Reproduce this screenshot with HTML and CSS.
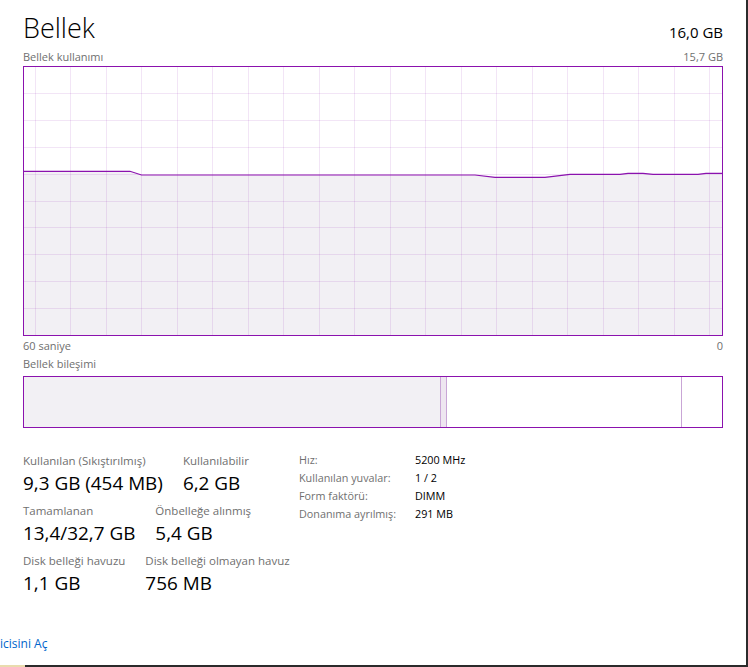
FILE: index.html
```html
<!DOCTYPE html>
<html lang="tr">
<head>
<meta charset="utf-8">
<title>Bellek</title>
<link rel="stylesheet" href="styles.css">
</head>
<body>
<div class="frame">
  <div class="window">
    <div class="content">
      <div class="header">
        <h1 class="title">Bellek</h1>
        <div class="total">16,0 GB</div>
      </div>
      <div class="caption-row caption-top">
        <span>Bellek kullanımı</span>
        <span>15,7 GB</span>
      </div>
      <svg class="chart" width="700" height="270" viewBox="0 0 700 270">
        <polygon class="chart-fill" points="0,105.3 107,105.3 118.5,109 452,109 472,111.3 522,111.3 547,108.3 597,108.3 605,107.3 620,107.3 630,108.3 675,108.3 683,107.3 700,107.3 700,270 0,270"/>
        <g class="grid">
          <line x1="12.5" y1="0" x2="12.5" y2="270"/>
          <line x1="47.5" y1="0" x2="47.5" y2="270"/>
          <line x1="83.5" y1="0" x2="83.5" y2="270"/>
          <line x1="118.5" y1="0" x2="118.5" y2="270"/>
          <line x1="154.5" y1="0" x2="154.5" y2="270"/>
          <line x1="189.5" y1="0" x2="189.5" y2="270"/>
          <line x1="225.5" y1="0" x2="225.5" y2="270"/>
          <line x1="260.5" y1="0" x2="260.5" y2="270"/>
          <line x1="296.5" y1="0" x2="296.5" y2="270"/>
          <line x1="331.5" y1="0" x2="331.5" y2="270"/>
          <line x1="367.5" y1="0" x2="367.5" y2="270"/>
          <line x1="402.5" y1="0" x2="402.5" y2="270"/>
          <line x1="438.5" y1="0" x2="438.5" y2="270"/>
          <line x1="473.5" y1="0" x2="473.5" y2="270"/>
          <line x1="509.5" y1="0" x2="509.5" y2="270"/>
          <line x1="544.5" y1="0" x2="544.5" y2="270"/>
          <line x1="580.5" y1="0" x2="580.5" y2="270"/>
          <line x1="615.5" y1="0" x2="615.5" y2="270"/>
          <line x1="651.5" y1="0" x2="651.5" y2="270"/>
          <line x1="686.5" y1="0" x2="686.5" y2="270"/>
          <line x1="0" y1="27.5" x2="700" y2="27.5"/>
          <line x1="0" y1="54.5" x2="700" y2="54.5"/>
          <line x1="0" y1="81.5" x2="700" y2="81.5"/>
          <line x1="0" y1="108.5" x2="700" y2="108.5"/>
          <line x1="0" y1="135.5" x2="700" y2="135.5"/>
          <line x1="0" y1="161.5" x2="700" y2="161.5"/>
          <line x1="0" y1="188.5" x2="700" y2="188.5"/>
          <line x1="0" y1="215.5" x2="700" y2="215.5"/>
          <line x1="0" y1="242.5" x2="700" y2="242.5"/>
        </g>
        <polyline class="chart-line" points="0,105.3 107,105.3 118.5,109 452,109 472,111.3 522,111.3 547,108.3 597,108.3 605,107.3 620,107.3 630,108.3 675,108.3 683,107.3 700,107.3"/>
        <rect class="chart-border" x="0.5" y="0.5" width="699" height="269"/>
      </svg>
      <div class="caption-row caption-axis">
        <span>60 saniye</span>
        <span>0</span>
      </div>
      <div class="caption-row caption-comp">
        <span>Bellek bileşimi</span>
      </div>
      <div class="composition">
        <div class="seg seg-inuse"></div>
        <div class="seg seg-modified"></div>
        <div class="seg seg-standby"></div>
        <div class="seg seg-free"></div>
      </div>
      <div class="stats">
        <div class="stats-left">
          <div class="stat-row">
            <div class="stat"><div class="stat-label">Kullanılan (Sıkıştırılmış)</div><div class="stat-value">9,3 GB (454 MB)</div></div>
            <div class="stat"><div class="stat-label">Kullanılabilir</div><div class="stat-value">6,2 GB</div></div>
          </div>
          <div class="stat-row">
            <div class="stat"><div class="stat-label">Tamamlanan</div><div class="stat-value">13,4/32,7 GB</div></div>
            <div class="stat"><div class="stat-label">Önbelleğe alınmış</div><div class="stat-value">5,4 GB</div></div>
          </div>
          <div class="stat-row">
            <div class="stat"><div class="stat-label">Disk belleği havuzu</div><div class="stat-value">1,1 GB</div></div>
            <div class="stat"><div class="stat-label">Disk belleği olmayan havuz</div><div class="stat-value">756 MB</div></div>
          </div>
        </div>
        <div class="stats-right">
          <div class="kv-label">Hız:</div><div class="kv-value">5200 MHz</div>
          <div class="kv-label">Kullanılan yuvalar:</div><div class="kv-value">1 / 2</div>
          <div class="kv-label">Form faktörü:</div><div class="kv-value">DIMM</div>
          <div class="kv-label">Donanıma ayrılmış:</div><div class="kv-value">291 MB</div>
        </div>
      </div>
    </div>
    <div class="footer">
      <a class="link" href="#">icisini Aç</a>
    </div>
  </div>
  <div class="bottom-edge"><div class="bottom-accent"></div></div>
</div>
</body>
</html>
```

FILE: styles.css
```css
html, body {
  margin: 0;
  padding: 0;
  background: #ffffff;
}

.frame {
  width: 748px;
  height: 667px;
  display: flex;
  flex-direction: column;
  font-family: "Open Sans", "Noto Sans", sans-serif;
  color: #000;
}

.window {
  flex: 1;
  background: #ffffff;
  border-right: 2px solid #2b2b2b;
  display: flex;
  flex-direction: column;
}

.content {
  padding: 12px 23px 0 23px;
}

.header {
  display: flex;
  justify-content: space-between;
  align-items: baseline;
  height: 32px;
}

.title {
  margin: 0;
  font-size: 27px;
  line-height: 32px;
  font-weight: 300;
  color: #000;
}

.total {
  font-size: 15px;
  line-height: 32px;
  color: #000;
}

.caption-row {
  display: flex;
  justify-content: space-between;
  font-size: 11px;
  line-height: 14px;
  color: #6f6f6f;
}

.caption-top {
  margin-top: 6px;
  margin-bottom: 2px;
}

.chart {
  display: block;
}

.chart-fill {
  fill: #f2f0f4;
}

.grid line {
  stroke: rgba(139, 18, 174, 0.11);
  stroke-width: 1;
  shape-rendering: crispEdges;
}

.chart-line {
  fill: none;
  stroke: #8b12ae;
  stroke-width: 1.2;
}

.chart-border {
  fill: none;
  stroke: #8b12ae;
  stroke-width: 1;
  shape-rendering: crispEdges;
}

.caption-axis {
  margin-top: 3px;
}

.caption-comp {
  margin-top: 4px;
}

.composition {
  margin-top: 5px;
  height: 52px;
  box-sizing: border-box;
  border: 1px solid #8b12ae;
  display: flex;
}

.seg {
  height: 100%;
  box-sizing: border-box;
}

.seg-inuse {
  width: 416px;
  background: #f2f0f4;
}

.seg-modified {
  width: 7px;
  background: #eee6f0;
  border-left: 1px solid #c9a6d6;
  border-right: 1px solid #c9a6d6;
}

.seg-standby {
  width: 234px;
  background: #ffffff;
}

.seg-free {
  flex: 1;
  background: #ffffff;
  border-left: 1px solid #c9a6d6;
}

.stats {
  margin-top: 23px;
  display: flex;
}

.stats-left {
  width: 276px;
  padding-top: 1.5px;
  display: flex;
  flex-direction: column;
  gap: 7.5px;
}

.stat-row {
  display: flex;
  gap: 20px;
}

.stat {
  display: flex;
  flex-direction: column;
  gap: 2.5px;
  white-space: nowrap;
}

.stat-label {
  font-size: 11.5px;
  line-height: 16px;
  color: #6f6f6f;
}

.stat-value {
  font-size: 18.9px;
  line-height: 24px;
  color: #000;
}

.stats-right {
  display: grid;
  grid-template-columns: 116px auto;
  grid-auto-rows: 18px;
  font-size: 10.8px;
  line-height: 18px;
  align-content: start;
}

.kv-label {
  color: #6f6f6f;
  white-space: nowrap;
}

.kv-value {
  color: #000;
  white-space: nowrap;
}

.footer {
  margin-top: 36px;
}

.link {
  font-size: 12px;
  line-height: 16px;
  color: #0066cc;
  text-decoration: none;
}

.bottom-edge {
  height: 2px;
  background: #2b2b2b;
  display: flex;
}

.bottom-accent {
  width: 25px;
  background: #e9dcae;
}
```
